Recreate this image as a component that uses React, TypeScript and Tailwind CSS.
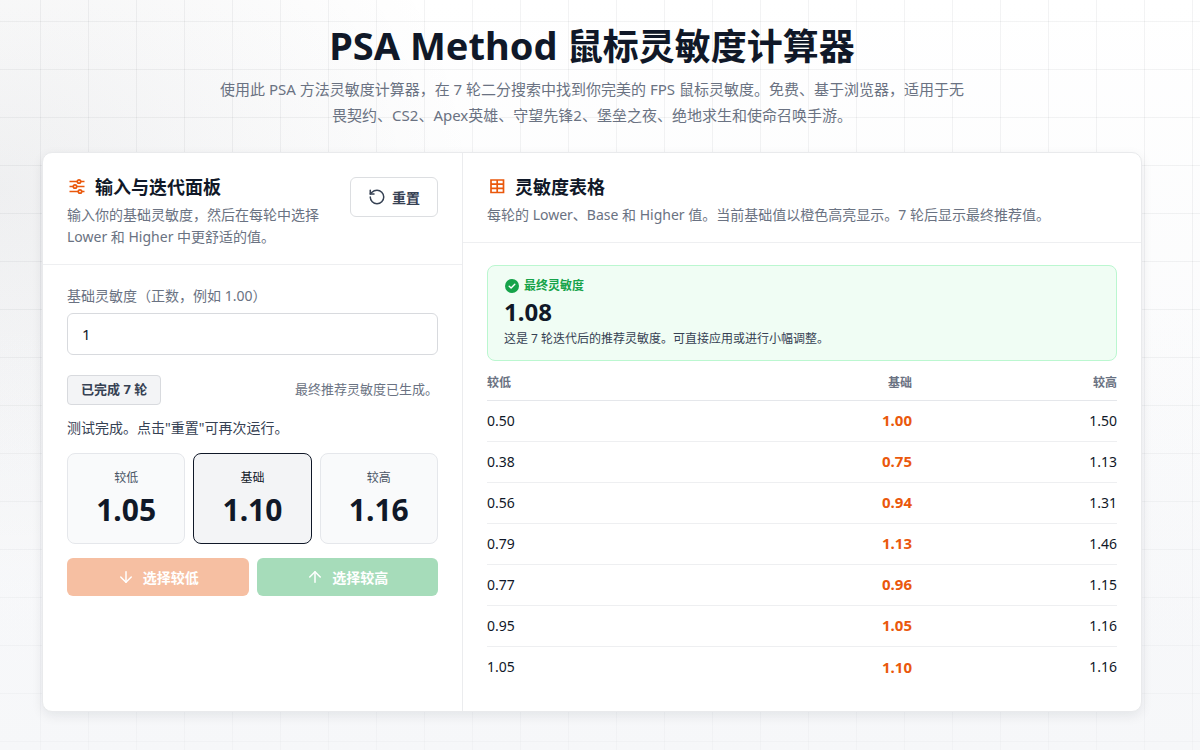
import { useState } from 'react';
import type { ReactNode } from 'react';
import { ArrowDown, ArrowUp, RotateCcw } from 'lucide-react';

interface Round {
  lower: string;
  base: string;
  higher: string;
}

const ROUNDS: Round[] = [
  { lower: '0.50', base: '1.00', higher: '1.50' },
  { lower: '0.38', base: '0.75', higher: '1.13' },
  { lower: '0.56', base: '0.94', higher: '1.31' },
  { lower: '0.79', base: '1.13', higher: '1.46' },
  { lower: '0.77', base: '0.96', higher: '1.15' },
  { lower: '0.95', base: '1.05', higher: '1.16' },
  { lower: '1.05', base: '1.10', higher: '1.16' },
];

function SlidersIcon() {
  return (
    <svg viewBox="0 0 20 20" className="size-5 text-[#ea580c]" fill="none" stroke="currentColor" strokeWidth="1.7">
      <path d="M2.5 4.5h7.7M13.8 4.5h3.7M2.5 9.5h3.7M9.8 9.5h7.7M2.5 14.5h8.7M14.8 14.5h2.7" />
      <circle cx="12" cy="4.5" r="1.7" />
      <circle cx="8" cy="9.5" r="1.7" />
      <circle cx="13" cy="14.5" r="1.7" />
    </svg>
  );
}

function TableIcon() {
  return (
    <svg viewBox="0 0 20 20" className="size-5 text-[#ea580c]" fill="none" stroke="currentColor" strokeWidth="1.7">
      <path d="M4 3h12.5v12.5H4zM10.2 3v12.5M4 7.2h12.5M4 11.4h12.5" />
    </svg>
  );
}

function CheckIcon() {
  return (
    <svg viewBox="0 0 16 16" className="size-4 text-[#16a34a]" fill="none">
      <circle cx="8" cy="8" r="7" fill="currentColor" />
      <path d="M5.2 8.3l1.9 1.8 3.7-3.8" stroke="white" strokeWidth="1.4" strokeLinecap="round" strokeLinejoin="round" />
    </svg>
  );
}

function PanelTitle({ icon, children }: { icon: ReactNode; children: ReactNode }) {
  return (
    <h2 className="flex items-center gap-2 text-[18px] leading-5 font-bold text-gray-900">
      {icon}
      {children}
    </h2>
  );
}

function ValueCard({ label, value, active = false }: { label: string; value: string; active?: boolean }) {
  return (
    <div
      className={`flex flex-col items-center rounded-lg border pt-[15px] pb-[13px] ${
        active ? 'border-gray-900 bg-gray-100 text-gray-900' : 'border-gray-200 bg-gray-50 text-gray-600'
      }`}
    >
      <span className="text-[12px] leading-[18px]">{label}</span>
      <span className="mt-0.5 text-[30px] leading-[41px] font-bold text-gray-900">{value}</span>
    </div>
  );
}

export default function App() {
  const [base, setBase] = useState('1');

  return (
    <div className="min-h-screen bg-[linear-gradient(to_bottom,transparent_40%,rgba(246,247,249,0.6)),linear-gradient(to_right,rgba(17,24,39,0.05)_1px,transparent_1px),linear-gradient(to_bottom,rgba(17,24,39,0.05)_1px,transparent_1px),radial-gradient(ellipse_480px_420px_at_0%_25%,rgba(17,24,39,0.06),transparent),linear-gradient(to_bottom,#ffffff,#f6f7f9)] bg-size-[auto,48px_48px,48px_48px,auto,auto] bg-position-[0_0,40px_21px,40px_21px,0_0,0_0] pt-6 pr-4 pb-6 font-['Noto_Sans','Noto_Sans_CJK_SC',sans-serif] text-gray-900">
      <main className="mx-auto max-w-[1100px]">
        <header className="text-center">
          <h1 className="text-[36px] leading-[46px] font-bold">
            <span className="text-[38px] leading-none">PSA Method</span> 鼠标灵敏度计算器
          </h1>
          <p className="mx-auto mt-1.5 max-w-[750px] text-[15px] leading-[26px] text-gray-500">
            使用此 PSA 方法灵敏度计算器，在 7 轮二分搜索中找到你完美的 FPS 鼠标灵敏度。免费、基于浏览器，适用于无畏契约、CS2、Apex英雄、守望先锋2、堡垒之夜、绝地求生和使命召唤手游。
          </p>
        </header>

        <div className="mt-6 grid grid-cols-[420px_1fr] overflow-hidden rounded-[10px] border border-[#e9eaec] bg-white shadow-[0_4px_12px_rgba(17,24,39,0.08)]">
          <section className="border-r border-[#ebecee]">
            <div className="flex items-start justify-between gap-4 border-b border-[#eeeff1] px-6 pt-6 pb-4">
              <div className="flex flex-col gap-[7px]">
                <PanelTitle icon={<SlidersIcon />}>输入与迭代面板</PanelTitle>
                <p className="text-[14px] leading-[22px] text-gray-500">
                  输入你的基础灵敏度，然后在每轮中选择 Lower 和 Higher 中更舒适的值。
                </p>
              </div>
              <button
                type="button"
                className="flex h-10 shrink-0 items-center gap-1.5 rounded-md border border-[#dcdee1] px-[17px] text-[14px] font-bold text-gray-700"
              >
                <RotateCcw size={18} strokeWidth={2} />
                重置
              </button>
            </div>

            <div className="px-6 py-5">
              <label htmlFor="base-sensitivity" className="block text-[14px] leading-[22px] text-gray-500">
                基础灵敏度（正数，例如 1.00）
              </label>
              <input
                id="base-sensitivity"
                type="text"
                inputMode="decimal"
                value={base}
                onChange={(e) => setBase(e.target.value)}
                className="mt-1.5 h-[42px] w-full rounded-md border border-[#d8dade] px-3.5 text-[15px]"
              />

              <div className="mt-5 flex items-center justify-between">
                <span className="flex h-[30px] items-center rounded border border-[#d8dade] bg-gray-100 px-[13px] text-[13px] font-bold text-gray-700">
                  已完成 7 轮
                </span>
                <span className="text-[13px] text-gray-500">最终推荐灵敏度已生成。</span>
              </div>
              <p className="mt-3 text-[14px] leading-[22px] text-gray-700">测试完成。点击"重置"可再次运行。</p>

              <div className="mt-3.5 grid grid-cols-3 gap-2">
                <ValueCard label="较低" value="1.05" />
                <ValueCard label="基础" value="1.10" active />
                <ValueCard label="较高" value="1.16" />
              </div>

              <div className="mt-3.5 grid grid-cols-2 gap-2 text-[14px] font-bold text-white">
                <button type="button" disabled className="flex h-[38px] items-center justify-center gap-2 rounded-md bg-[#f6bfa2]">
                  <ArrowDown size={18} strokeWidth={2} />
                  选择较低
                </button>
                <button type="button" disabled className="flex h-[38px] items-center justify-center gap-2 rounded-md bg-[#a6dcba]">
                  <ArrowUp size={18} strokeWidth={2} />
                  选择较高
                </button>
              </div>
            </div>
          </section>

          <section>
            <div className="flex flex-col gap-[7px] border-b border-[#eeeff1] px-6 pt-6 pb-4">
              <PanelTitle icon={<TableIcon />}>灵敏度表格</PanelTitle>
              <p className="text-[14px] leading-[22px] text-gray-500">
                每轮的 Lower、Base 和 Higher 值。当前基础值以橙色高亮显示。7 轮后显示最终推荐值。
              </p>
            </div>

            <div className="px-6 pt-[22px] pb-6">
              <div className="flex flex-col gap-1 rounded-lg border border-[#bbf7d0] bg-[#f0fdf4] px-4 py-3">
                <div className="flex items-center gap-1 text-[12px] leading-4 font-bold text-[#16a34a]">
                  <CheckIcon />
                  最终灵敏度
                </div>
                <div className="text-[24px] leading-7 font-bold">1.08</div>
                <p className="text-[12px] leading-[18px] text-gray-700">
                  这是 7 轮迭代后的推荐灵敏度。可直接应用或进行小幅调整。
                </p>
              </div>

              <table className="mt-1 w-full text-right text-[14px]">
                <thead>
                  <tr className="h-[35px] border-b border-gray-200 text-[12px] text-gray-500">
                    <th className="pt-0.5 text-left font-semibold">较低</th>
                    <th className="pt-0.5 font-semibold">基础</th>
                    <th className="w-[205px] pt-0.5 font-semibold">较高</th>
                  </tr>
                </thead>
                <tbody>
                  {ROUNDS.map((r, i) => (
                    <tr key={i} className="h-[41px] border-b border-[#eeeff1] last:border-b-0">
                      <td className="text-left">{r.lower}</td>
                      <td className="text-[15px] font-bold text-[#ea580c]">{r.base}</td>
                      <td>{r.higher}</td>
                    </tr>
                  ))}
                </tbody>
              </table>
            </div>
          </section>
        </div>
      </main>
    </div>
  );
}
